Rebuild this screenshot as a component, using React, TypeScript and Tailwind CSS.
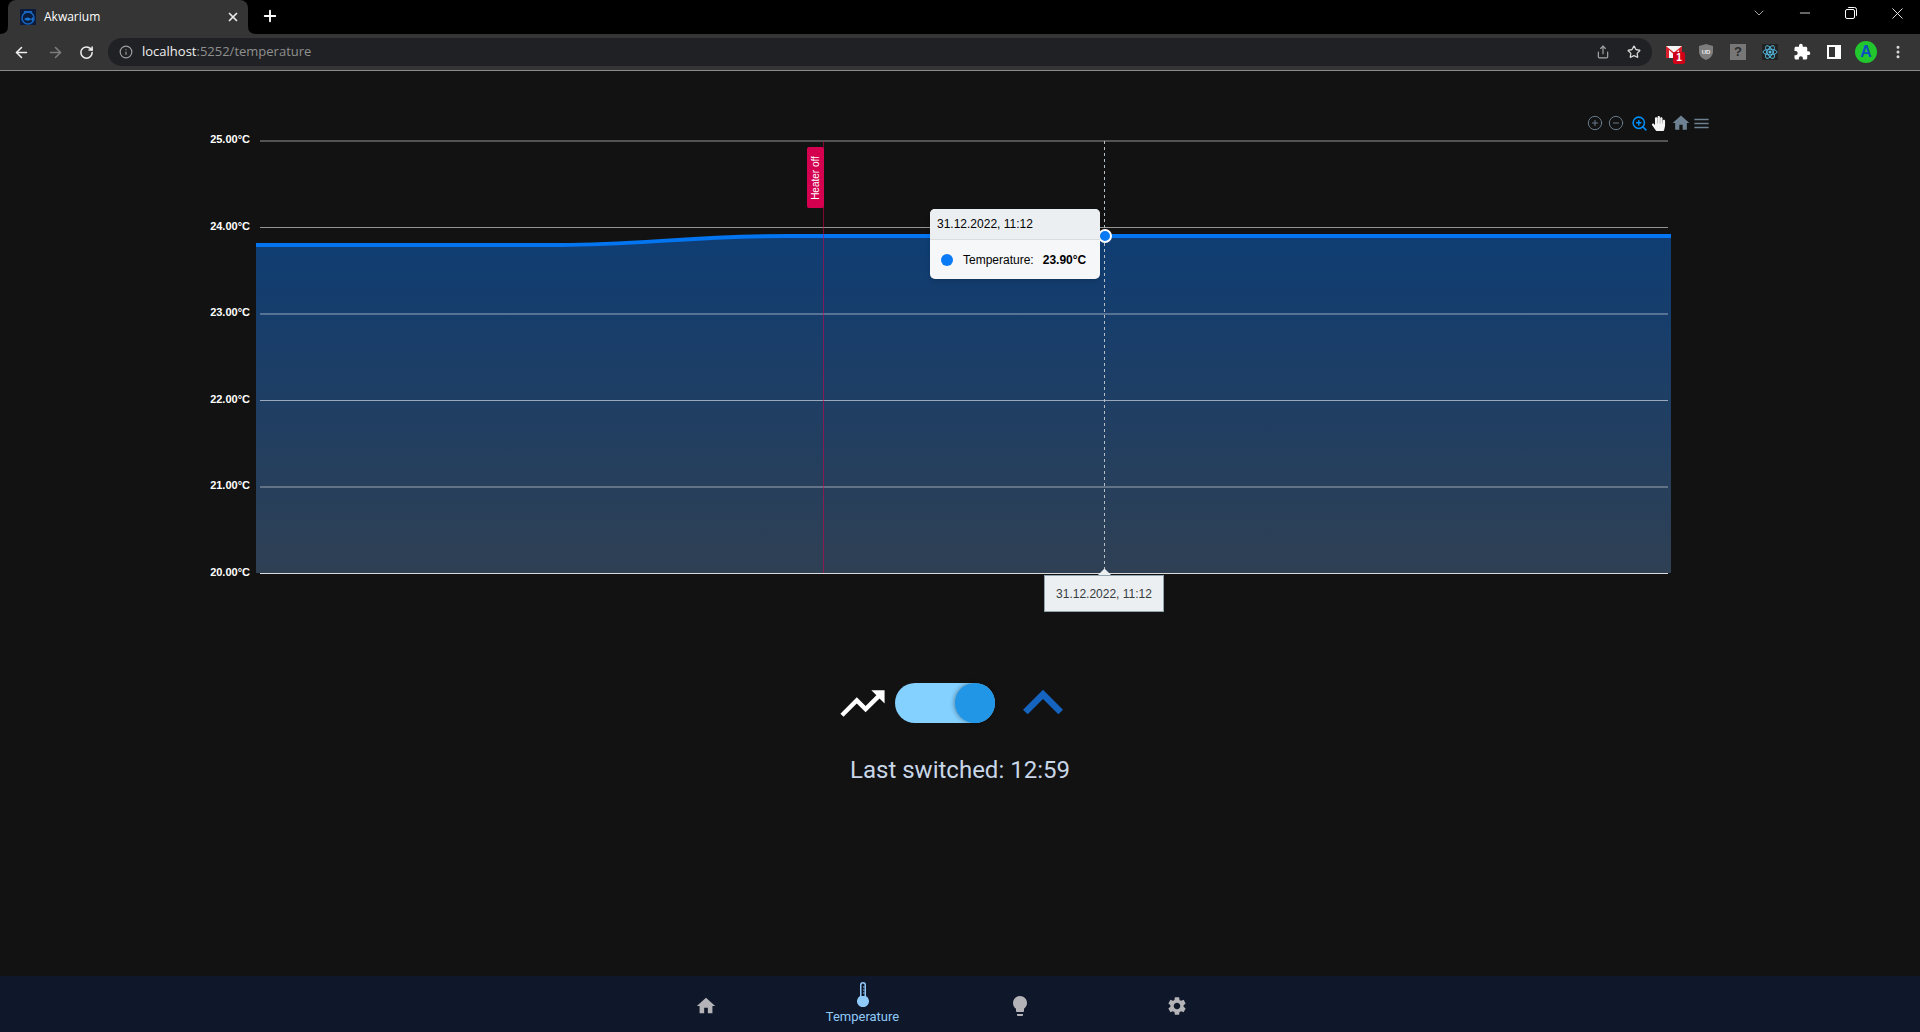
import { ArrowLeft, ArrowRight, ChevronDown, CircleMinus, CirclePlus, Info, Minus, MoreVertical, Plus, RotateCw, Share, Star, X, ZoomIn } from 'lucide-react';
import { FaHandPaper } from 'react-icons/fa';
import { MdExpandLess, MdExtension, MdHome, MdLightbulb, MdMenu, MdSettings, MdTrendingUp } from 'react-icons/md';

const gridLines = [
  { y: 141, label: '25.00°C' },
  { y: 227.5, label: '24.00°C' },
  { y: 314, label: '23.00°C' },
  { y: 400.5, label: '22.00°C' },
  { y: 487, label: '21.00°C' },
  { y: 573.5, label: '20.00°C' },
];

const curve = 'M256 245 L560 245 C640 245 690 236 790 236 L1671 236';

function BrowserTabs() {
  return (
    <div className="flex h-[34px] items-end bg-black pl-2 text-white">
      <div className="relative flex h-[34px] w-[240px] items-center rounded-t-lg bg-[#353535] pl-3 pr-2">
        <svg className="absolute bottom-0 -left-2" width="8" height="8" viewBox="0 0 8 8">
          <path d="M8 0 V8 H0 Q8 8 8 0 Z" fill="#353535" />
        </svg>
        <svg className="absolute bottom-0 -right-2" width="8" height="8" viewBox="0 0 8 8">
          <path d="M0 0 V8 H8 Q0 8 0 0 Z" fill="#353535" />
        </svg>
        <svg width="16" height="16" viewBox="0 0 16 16" className="shrink-0">
          <rect width="16" height="16" fill="#0c1c3c" />
          <circle cx="8" cy="9" r="6" fill="none" stroke="#1565c0" strokeWidth="1.5" />
          <rect x="4" y="2" width="8" height="2" fill="#1565c0" />
          <path d="M4 10 Q8 7 11 10 L13 8 V12 L11 10.5 Q8 13 4 10 Z" fill="#1976d2" />
        </svg>
        <span className="ml-2 font-['Open_Sans',sans-serif] text-xs">Akwarium</span>
        <X className="ml-auto" size={14} strokeWidth={3} color="#e8e8e8" />
      </div>
      <Plus className="mb-[9px] ml-[13px]" size={18} strokeWidth={2.5} />
      <div className="ml-auto flex h-[34px] items-start">
        <span className="flex h-[26px] w-[46px] items-center justify-center">
          <ChevronDown size={16} strokeWidth={1.2} color="#ccc" />
        </span>
        <span className="flex h-[26px] w-[46px] items-center justify-center">
          <Minus size={16} strokeWidth={1.2} />
        </span>
        <span className="flex h-[26px] w-[46px] items-center justify-center">
          <svg width="12" height="12" viewBox="0 0 12 12" fill="none" stroke="white">
            <rect x="0.5" y="2.5" width="9" height="9" rx="1.5" />
            <path d="M3 1 Q3 .5 4 .5 H9.5 Q11.5 .5 11.5 2.5 V8 Q11.5 9 11 9" />
          </svg>
        </span>
        <span className="flex h-[26px] w-[46px] items-center justify-center">
          <X size={19} strokeWidth={1.1} />
        </span>
      </div>
    </div>
  );
}

function ExtensionIcons() {
  return (
    <div className="flex items-center">
      <span className="relative flex h-8 w-8 items-center justify-center">
        <svg width="16" height="12" viewBox="0 0 16 12">
          <rect width="16" height="12" fill="#f5f5f5" />
          <path d="M0 0 L8 6.5 L16 0 V12 H13 V4 L8 8.5 L3 4 V12 H0 Z" fill="#d9202c" />
        </svg>
        <span className="absolute left-[15px] top-[16px] flex h-3 w-3 items-center justify-center rounded-[2px] bg-[#d00018] font-['Liberation_Sans',sans-serif] text-[10px] font-bold leading-none text-white">
          1
        </span>
      </span>
      <span className="flex h-8 w-8 items-center justify-center">
        <svg width="14" height="16" viewBox="0 0 14 16">
          <path d="M7 0 L14 2 V8 Q14 13 7 16 Q0 13 0 8 V2 Z" fill="#7d7d7d" />
          <text x="7" y="9.5" textAnchor="middle" fontSize="6" fontWeight="700" fill="#eee" fontFamily="Liberation Sans">UD</text>
        </svg>
      </span>
      <span className="flex h-8 w-8 items-center justify-center">
        <span className="flex h-4 w-4 items-center justify-center bg-[#777] font-['Liberation_Sans',sans-serif] text-[13px] font-bold text-[#2b2b2b]">?</span>
      </span>
      <span className="flex h-8 w-8 items-center justify-center">
        <svg width="16" height="16" viewBox="0 0 16 16" fill="none" stroke="#56bfe6" strokeWidth="0.9">
          <rect width="16" height="16" fill="#222" stroke="none" />
          <circle cx="8" cy="8" r="1.5" fill="#56bfe6" stroke="none" />
          <ellipse cx="8" cy="8" rx="7" ry="2.8" />
          <ellipse cx="8" cy="8" rx="7" ry="2.8" transform="rotate(60 8 8)" />
          <ellipse cx="8" cy="8" rx="7" ry="2.8" transform="rotate(120 8 8)" />
        </svg>
      </span>
      <span className="flex h-8 w-8 items-center justify-center">
        <MdExtension size={18} color="#fff" />
      </span>
      <span className="flex h-8 w-8 items-center justify-center">
        <span className="flex h-[14px] w-[14px] bg-white pl-[2px] py-[2px] pr-[6px]">
          <span className="h-full w-full bg-[#353535]" />
        </span>
      </span>
      <span className="flex h-8 w-8 items-center justify-center">
        <span className="flex h-[22px] w-[22px] items-center justify-center rounded-full bg-[#22c72e] font-['Liberation_Sans',sans-serif] text-base font-bold text-[#0c4fc0]">
          A
        </span>
      </span>
      <span className="flex h-8 w-8 items-center justify-center">
        <MoreVertical size={16} color="#ddd" strokeWidth={2.5} />
      </span>
    </div>
  );
}

function BrowserToolbar() {
  return (
    <div className="flex h-[37px] items-center border-b border-[#8a8a8a] bg-[#353535] pl-[13px] pr-[6px]">
      <ArrowLeft size={17} strokeWidth={2.2} color="#f0f0f0" />
      <ArrowRight className="ml-[17px]" size={17} strokeWidth={2.2} color="#7e7e7e" />
      <RotateCw className="ml-[15px]" size={15} strokeWidth={2.4} color="#f0f0f0" />
      <div className="ml-[14px] flex h-7 w-[1544px] items-center rounded-full bg-[#202124] pl-[11px] pr-[11px]">
        <Info size={14} color="#a0a0a0" />
        <span className="ml-[9px] font-['Open_Sans',sans-serif] text-[13px] text-[#f0f0f0]">
          localhost<span className="text-[#8f8f8f]">:5252/temperature</span>
        </span>
        <Share className="ml-auto" size={14} color="#a8a8a8" />
        <Star className="ml-[17px]" size={14} color="#d8d8d8" strokeWidth={2.2} />
      </div>
      <div className="ml-auto">
        <ExtensionIcons />
      </div>
    </div>
  );
}

function TemperatureChart() {
  return (
    <div className="relative mx-auto mt-[29px] h-[530px] w-[1520px]">
      <svg className="block" width="1520" height="530" viewBox="200 100 1520 530">
        <defs>
          <linearGradient id="areaFill" x1="0" y1="0" x2="0" y2="1">
            <stop offset="0" stopColor="#0f3d73" />
            <stop offset="1" stopColor="#2f4054" />
          </linearGradient>
        </defs>
        <path d={`${curve} V573 H256 Z`} fill="url(#areaFill)" />
        {gridLines.map((line) => (
          <g key={line.label}>
            <line x1="260" x2="1668" y1={line.y} y2={line.y} stroke="#ffffff" strokeOpacity={line.y > 570 ? 0.85 : 0.55} />
            <text x="250" y={line.y + 2} textAnchor="end" fontSize="11" fontWeight="700" fill="#fff" fontFamily="Liberation Sans">
              {line.label}
            </text>
          </g>
        ))}
        <path d={curve} fill="none" stroke="#0475f0" strokeWidth="4" />
        <line x1="823.5" x2="823.5" y1="141" y2="573" stroke="#d4004f" strokeOpacity="0.55" />
        <line x1="1104.5" x2="1104.5" y1="141" y2="573" stroke="#b6bec6" strokeDasharray="3 3" />
        <circle cx="1105" cy="236" r="6" fill="#0a7bf5" stroke="#fff" strokeWidth="2" />
        <path d="M1098 575 L1104.5 568.5 L1111 575 Z" fill="#eceff1" />
      </svg>

      <div className="absolute right-[9px] top-[13px] flex items-center text-[#6e8192]">
        <CirclePlus className="mr-[5px]" size={16} strokeWidth={1.4} />
        <CircleMinus className="mr-[7px]" size={16} strokeWidth={1.4} />
        <ZoomIn className="mr-[3px]" size={17} strokeWidth={2.2} color="#008ffb" />
        <FaHandPaper className="mr-[5px]" size={15} color="#f5f5f5" />
        <MdHome className="mr-[1px]" size={20} />
        <MdMenu size={19} />
      </div>

      <div className="absolute left-[607px] top-[47px] flex h-[61px] w-[17px] items-center justify-center rounded-[2px] bg-[#d4004f]">
        <span className="-rotate-90 whitespace-nowrap font-['Liberation_Sans',sans-serif] text-[10px] leading-none text-white">
          Heater off
        </span>
      </div>

      <div className="absolute left-[730px] top-[109px] h-[70px] w-[170px] overflow-hidden rounded-[5px] bg-[#f5f7f9] font-['Liberation_Sans',sans-serif] text-xs text-black shadow-md">
        <div className="flex h-[31px] items-center border-b border-[#dddddd] bg-[#eceff1] px-[7px]">31.12.2022, 11:12</div>
        <div className="flex h-[39px] items-center pl-[11px]">
          <span className="h-3 w-3 rounded-full bg-[#0a7bf5]" />
          <span className="ml-[10px]">Temperature:</span>
          <span className="ml-[9px] font-bold">23.90°C</span>
        </div>
      </div>

      <div className="absolute left-[844px] top-[475px] flex h-[37px] w-[120px] items-center justify-center border border-[#90a4ae] bg-[#eceff1] font-['Liberation_Sans',sans-serif] text-xs text-[#373d3f]">
        31.12.2022, 11:12
      </div>
    </div>
  );
}

function HeaterControls() {
  return (
    <>
      <div className="mt-[53px] flex h-10 items-center justify-center pr-px">
        <MdTrendingUp size={53} color="#fff" />
        <div className="ml-[6px] flex h-10 w-[100px] justify-end rounded-full bg-[#84d0ff]">
          <span className="h-10 w-10 rounded-full bg-[#2196e6] shadow-[-1px_0_4px_rgba(0,0,0,0.35)]" />
        </div>
        <MdExpandLess className="ml-2" size={80} color="#1565c0" />
      </div>
      <p className="mt-[31px] text-center font-['Roboto',sans-serif] text-2xl text-[#c8d6e8]">Last switched: 12:59</p>
    </>
  );
}

function BottomNav() {
  return (
    <nav className="flex h-14 justify-center bg-[#0f172a] pr-[38px] font-['Roboto',sans-serif]">
      <div className="flex w-[157px] items-center justify-center pt-[4px]">
        <MdHome size={22} color="#b4b4b8" />
      </div>
      <div className="flex w-[157px] flex-col items-center pt-[5px]">
        <svg width="12" height="26" viewBox="0 0 12 26">
          <path d="M3 4 A3 3 0 0 1 9 4 V15 A6 6 0 1 1 3 15 Z" fill="#90caf9" />
          <path d="M4.5 4 A1.5 1.5 0 0 1 7.5 4 V15 H4.5 Z" fill="#0f172a" />
          <path d="M6 6 H7.5 M6 9 H7.5 M6 12 H7.5" stroke="#90caf9" />
        </svg>
        <span className="mt-[2px] text-[13px] leading-[16px] text-[#90caf9]">Temperature</span>
      </div>
      <div className="flex w-[157px] items-center justify-center pt-[4px]">
        <MdLightbulb size={24} color="#b4b4b8" />
      </div>
      <div className="flex w-[157px] items-center justify-center pt-[4px]">
        <MdSettings size={22} color="#b4b4b8" />
      </div>
    </nav>
  );
}

export default function App() {
  return (
    <div className="flex h-screen flex-col overflow-hidden bg-[#121212]">
      <BrowserTabs />
      <BrowserToolbar />
      <main className="flex-1">
        <TemperatureChart />
        <HeaterControls />
      </main>
      <BottomNav />
    </div>
  );
}
